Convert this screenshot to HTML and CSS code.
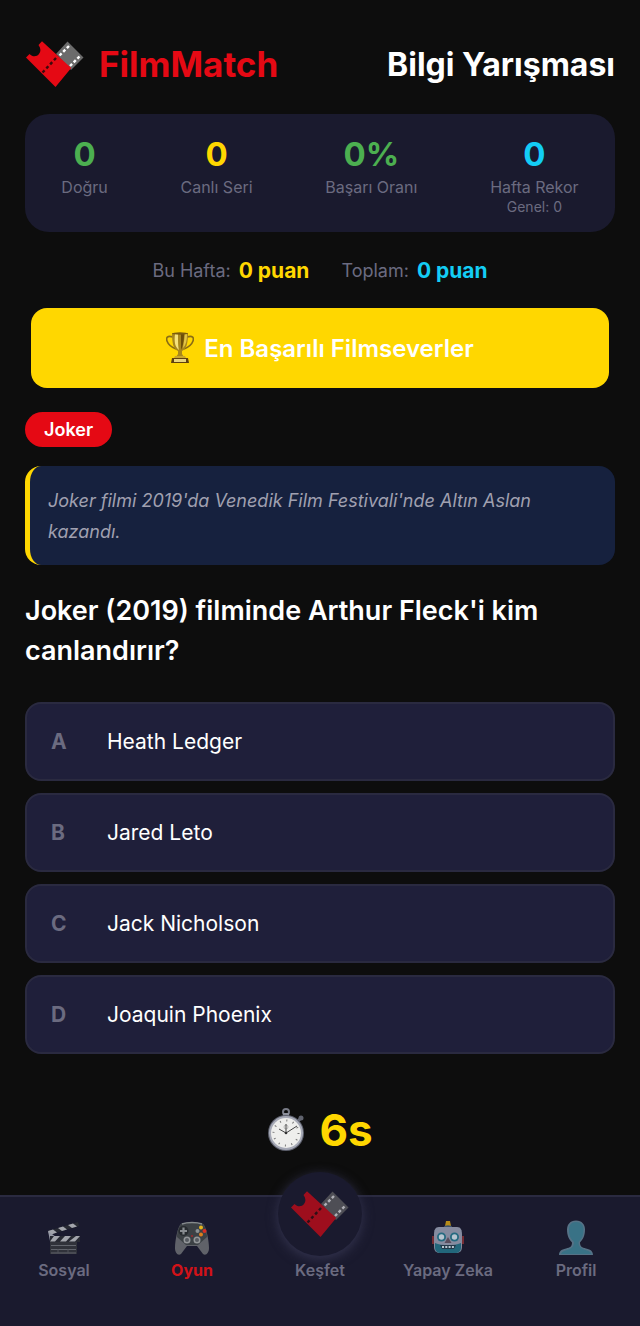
FILE: index.html
```html
<!DOCTYPE html>
<html lang="tr">
<head>
  <meta charset="UTF-8">
  <meta name="viewport" content="width=device-width, initial-scale=1.0">
  <title>FilmMatch - Bilgi Yarışması</title>
  <link rel="stylesheet" href="styles.css">
</head>
<body>

<!-- Logo is used in the header and in the nav -->
<svg class="sprite" aria-hidden="true">
  <symbol id="logo" viewBox="0 0 60 48">
    <path d="M42.500 1.500 58.500 17.500 46 30 31 14z" fill="#6b6b6b"/>
    <path d="M34.500 15.500 45.500 4.500M45 26 56 15" stroke="#fff" stroke-width="2.400" stroke-dasharray="3 2.200" fill="none"/>
    <path d="M17 1.300 46.200 28 30.500 47 1 17.500 4.500 14C8 17.500 12 16.500 14 14 16 11.500 16 8.500 13.500 5z" fill="#e50914"/>
    <path d="M17.500 32.500 32 17" stroke="#3a0a0c" stroke-width="2.400" stroke-dasharray="3 2.600" fill="none"/>
  </symbol>
</svg>

<main class="content">
  <header class="header">
    <a href="#" class="brand">
      <svg class="brand-logo" aria-hidden="true"><use href="#logo"/></svg>
      <span>FilmMatch</span>
    </a>
    <h1 class="title">Bilgi Yarışması</h1>
  </header>

  <section class="stats">
    <div class="stat">
      <span class="stat-value green">0</span>
      <span class="stat-label">Doğru</span>
    </div>
    <div class="stat">
      <span class="stat-value yellow">0</span>
      <span class="stat-label">Canlı Seri</span>
    </div>
    <div class="stat">
      <span class="stat-value green">0%</span>
      <span class="stat-label">Başarı Oranı</span>
    </div>
    <div class="stat">
      <span class="stat-value blue">0</span>
      <span class="stat-label">Hafta Rekor</span>
      <span class="stat-sub">Genel: 0</span>
    </div>
  </section>

  <div class="points">
    <div class="point">Bu Hafta: <strong class="yellow">0 puan</strong></div>
    <div class="point">Toplam: <strong class="blue">0 puan</strong></div>
  </div>

  <button type="button" class="leaders">
    <svg class="trophy" viewBox="0 0 28 32" aria-hidden="true">
      <path d="M7 5C1 3 0 6 1 9s4 6 9 8M21 5c6-2 7 1 6 4s-4 6-9 8" fill="none" stroke="#8a6d14" stroke-width="1.600"/>
      <path d="M6 1h16c0 9-1 16-6 18v3l2 3h-8l2-3v-3C7 17 6 10 6 1z" fill="#a8871c"/>
      <path d="M9 2h3c0 8 0 12 1 16C9 15 8 10 9 2z" fill="#f6e27c"/>
      <path d="M15 2h3c0 7-1 12-3 16z" fill="#6b4e0a"/>
      <path d="M19 2h2c0 6-1 11-4 14z" fill="#e2c446"/>
      <ellipse cx="14" cy="1.500" rx="8" ry="1.200" fill="#7b5c0d"/>
      <path d="M9 24h10l1 2H8z" fill="#c9a62b"/>
      <path d="M6 26h16l1 5H5z" fill="#5f4010"/>
      <path d="M8 27h12v3H8z" fill="#e8d47e"/>
    </svg>
    <span>En Başarılı Filmseverler</span>
  </button>

  <span class="badge">Joker</span>

  <p class="fact">Joker filmi 2019'da Venedik Film Festivali'nde Altın Aslan kazandı.</p>

  <h2 class="question">Joker (2019) filminde Arthur Fleck'i kim canlandırır?</h2>

  <div class="options">
    <button type="button" class="option"><span class="letter">A</span><span>Heath Ledger</span></button>
    <button type="button" class="option"><span class="letter">B</span><span>Jared Leto</span></button>
    <button type="button" class="option"><span class="letter">C</span><span>Jack Nicholson</span></button>
    <button type="button" class="option"><span class="letter">D</span><span>Joaquin Phoenix</span></button>
  </div>

  <div class="timer">
    <svg class="stopwatch" viewBox="0 0 38 44" aria-hidden="true">
      <circle cx="19" cy="4" r="3" fill="none" stroke="#777a85" stroke-width="2"/>
      <path d="M16 5h6v5h-6z" fill="#8d909b"/>
      <path d="M30 14l4-4" stroke="#6d707b" stroke-width="3"/>
      <circle cx="34" cy="10" r="2.500" fill="#60636e"/>
      <circle cx="19" cy="25" r="18" fill="#5d606d"/>
      <circle cx="19" cy="25" r="17" fill="#a6a9b6"/>
      <circle cx="19" cy="25" r="15" fill="#eeeeec"/>
      <circle cx="19" cy="25" r="12.500" fill="none" stroke="#777" stroke-width="2" stroke-dasharray="1 5.545"/>
      <circle cx="19" cy="19" r="2" fill="none" stroke="#aaa" stroke-width=".8"/>
      <path d="M12 21 19 25 30 18M19 25V16" fill="none" stroke="#444" stroke-width="1"/>
      <circle cx="19" cy="25" r="1.300" fill="#333"/>
    </svg>
    <span>6s</span>
  </div>
</main>

<nav class="nav">
  <a href="#" class="nav-item">
    <svg class="nav-icon" viewBox="0 0 36 36" aria-hidden="true">
      <path d="M2 11 32 2l1 4L3 15z" fill="#272932"/>
      <path d="M2 11 7 9.500 11 12.500 4 15zM12 8l5-1.500 4 3-5 1.500zM22 5l5-1.500 4 3-5 1.500z" fill="#a3a5ac"/>
      <path d="M2 11 10 17 4 21z" fill="#9699a5"/>
      <path d="M4 16h30v6H4z" fill="#272932"/>
      <path d="M8 16h6l-5 5.500H4zM19 16h6l-5 5.500h-6zM30 16h4l-5 5.500h-6z" fill="#a3a5ac"/>
      <path d="M4 22h27v12H4z" fill="#30323a"/>
      <path d="M5 25.500h25M5 29.500h25M5 33h25" stroke="#62656d" stroke-width="1"/>
      <path d="M12 29v4M22 29v4" stroke="#50525b" stroke-width="1"/>
    </svg>
    <span>Sosyal</span>
  </a>
  <a href="#" class="nav-item active">
    <svg class="nav-icon" viewBox="0 0 36 36" aria-hidden="true">
      <path d="M7 4c4-2 18-2 22 0 3 2 6 16 6 24 0 5-3 8-6 6l-6-8H13l-6 8c-3 2-6-1-6-6C1 20 4 6 7 4z" fill="#606269"/>
      <path d="M7 4c4-2 18-2 22 0 2 2 4 8 4 13L24 25H12L3 17C3 12 5 6 7 4z" fill="#3c4145"/>
      <path d="M8 4c5-2 15-2 20 0" fill="none" stroke="#858a8c" stroke-width="1.500"/>
      <circle cx="9.500" cy="11" r="5" fill="#272b2f"/>
      <path d="M9.500 7.500v7M6 11h7" stroke="#888c90" stroke-width="2.200"/>
      <circle cx="27" cy="7.500" r="2" fill="#e5b51b"/>
      <circle cx="23.500" cy="11" r="2" fill="#8a9194"/>
      <circle cx="30.500" cy="11" r="2" fill="#d92f24"/>
      <circle cx="27" cy="14.500" r="2" fill="#de7d1d"/>
      <circle cx="13" cy="20" r="3.500" fill="#939699"/><circle cx="13" cy="20" r="2" fill="#565a60"/>
      <circle cx="23" cy="20" r="3.500" fill="#939699"/><circle cx="23" cy="20" r="2" fill="#565a60"/>
      <circle cx="18" cy="16" r="1" fill="#a52a2d"/>
    </svg>
    <span>Oyun</span>
  </a>
  <a href="#" class="nav-item">
    <span class="nav-circle">
      <svg class="circle-logo" aria-hidden="true"><use href="#logo"/></svg>
    </span>
    <span>Keşfet</span>
  </a>
  <a href="#" class="nav-item">
    <svg class="nav-icon" viewBox="0 0 36 36" aria-hidden="true">
      <path d="M2 16h4v8H2zM30 16h4v8h-4z" fill="#762d34"/>
      <path d="M16 1h4l1 5h-6z" fill="#b68c18"/>
      <ellipse cx="18" cy="7" rx="4" ry="1.800" fill="#3c526b"/>
      <path d="M9 7h18c4 0 5 3 5 8v11c0 5-2 7-6 7H10c-4 0-6-2-6-7V15c0-5 1-8 5-8z" fill="#858b9f"/>
      <path d="M5 23c7 3 19 3 26 0v4c0 4-2 6-6 6H11c-4 0-6-2-6-6z" fill="#22677b"/>
      <circle cx="11.500" cy="17" r="4.500" fill="#256a80"/><circle cx="11.500" cy="17" r="2.700" fill="#b7c5d0"/>
      <circle cx="24.500" cy="17" r="4.500" fill="#256a80"/><circle cx="24.500" cy="17" r="2.700" fill="#b7c5d0"/>
      <path d="M18 17l3.500 6h-7z" fill="#594d5d"/>
      <path d="M10 25h16l-2 4H12z" fill="#233949"/>
      <path d="M12 27h12" stroke="#b7c5d0" stroke-width="2" stroke-dasharray="2 1.300"/>
    </svg>
    <span>Yapay Zeka</span>
  </a>
  <a href="#" class="nav-item">
    <svg class="nav-icon" viewBox="0 0 36 36" aria-hidden="true">
      <path d="M18 0.500c6 0 9 4 9 9 0 6-2 10-5 13 0 4 2 5 6 6 5 1 7 3 7 6.500H1C1 31.500 3 29.500 8 28.500c4-1 6-2 6-6-3-3-5-7-5-13 0-5 3-9 9-9z" fill="#567286"/>
      <path d="M18 2c5 0 7.500 3 7.500 8 0 6-2 9-5 12 0 5 3 7 7 8 4 1 5 2 6 4H3c1-2 2-3 6-4 4-1 7-3 7-8-3-3-5-6-5-12 0-5 2-8 7-8z" fill="#397286"/>
    </svg>
    <span>Profil</span>
  </a>
</nav>

</body>
</html>
```
FILE: styles.css
```css
* {
  box-sizing: border-box;
}

body {
  margin: 0;
  min-height: 100vh;
  display: flex;
  flex-direction: column;
  background-color: #0d0d0d;
  color: #fff;
  font-family: Inter, "Liberation Sans", sans-serif;
}

button {
  font-family: inherit;
  cursor: pointer;
}

a {
  text-decoration: none;
}

.sprite {
  display: none;
}

/* Accent colors */
.green { color: #4caf50; }
.yellow { color: #ffd700; }
.blue { color: #13cdf5; }

.content {
  flex: 1;
  padding: 40px 25px 0;
}

/* Header */
.header {
  display: flex;
  justify-content: space-between;
  align-items: center;
  height: 48px;
}

.brand {
  display: flex;
  align-items: center;
  gap: 14px;
  color: #e50914;
  font-size: 35px;
  font-weight: 700;
}

.brand-logo {
  width: 60px;
  height: 48px;
}

.title {
  margin: 0;
  font-size: 32px;
  font-weight: 700;
}

/* Stats card */
.stats {
  display: flex;
  justify-content: space-around;
  margin-top: 26px;
  padding: 19px 0 16px;
  background-color: #1a1a2e;
  border-radius: 24px;
}

.stat {
  display: flex;
  flex-direction: column;
  align-items: center;
  color: #6b6b80;
}

.stat-value {
  font-size: 33px;
  line-height: 42px;
  font-weight: 700;
}

.stat-label {
  margin-top: 2px;
  font-size: 16px;
  line-height: 20px;
}

.stat-sub {
  font-size: 14px;
  line-height: 19px;
}

/* Points row */
.points {
  display: flex;
  justify-content: center;
  gap: 32px;
  margin-top: 25px;
  font-size: 18px;
  line-height: 28px;
  color: #6b6b80;
}

.point {
  display: flex;
  gap: 8px;
}

.point strong {
  font-size: 21px;
}

.leaders {
  display: flex;
  justify-content: center;
  align-items: center;
  gap: 10px;
  width: calc(100% - 12px);
  height: 80px;
  margin: 23px 6px 0;
  border: none;
  border-radius: 16px;
  background-color: #ffd700;
  color: #fff;
  font-size: 24px;
  font-weight: 600;
}

.trophy {
  width: 28px;
  height: 32px;
}

/* Question */
.badge {
  display: block;
  width: fit-content;
  margin-top: 24px;
  padding: 0 19px;
  border-radius: 18px;
  background-color: #e50914;
  font-size: 18px;
  line-height: 35px;
  font-weight: 600;
}

.fact {
  margin: 19px 0 0;
  padding: 19px 18px 18px;
  border-left: 5px solid #ffd700;
  border-radius: 16px;
  background-color: #16213e;
  color: #a0a0b0;
  font-size: 18px;
  line-height: 31px;
  font-style: italic;
}

.question {
  margin: 26px 0 0;
  font-size: 27px;
  line-height: 40px;
  font-weight: 600;
}

.options {
  display: grid;
  gap: 12px;
  margin-top: 31px;
}

.option {
  display: grid;
  grid-template-columns: 56px 1fr;
  align-items: center;
  height: 79px;
  padding: 0 24px;
  border: 2px solid #2a2a40;
  border-radius: 16px;
  background-color: #1f1f3a;
  color: #fff;
  font-size: 21px;
  text-align: left;
}

.letter {
  color: #6b6b80;
  font-weight: 700;
}

.timer {
  display: flex;
  justify-content: center;
  align-items: center;
  gap: 14px;
  margin: 51px 0 36px;
  color: #ffd700;
  font-size: 44px;
  line-height: 50px;
  font-weight: 700;
}

.stopwatch {
  width: 38px;
  height: 44px;
}

/* Bottom navigation */
.nav {
  display: grid;
  grid-template-columns: repeat(5, 1fr);
  height: 131px;
  padding-bottom: 46px;
  border-top: 2px solid #2a2a40;
  background-color: #1a1a2e;
}

.nav-item {
  display: flex;
  flex-direction: column;
  justify-content: flex-end;
  align-items: center;
  gap: 4px;
  color: #6b6b80;
  font-size: 16px;
  line-height: 20px;
  font-weight: 600;
}

.nav-item.active {
  color: #d11218;
  font-weight: 700;
}

.nav-icon {
  width: 36px;
  height: 36px;
}

/* Round button rises above the bar */
.nav-circle {
  display: flex;
  justify-content: center;
  align-items: center;
  width: 84px;
  height: 84px;
  margin-top: -26px;
  border-radius: 50%;
  background-color: #1a1a2e;
  box-shadow: 0 3px 12px #34344f;
}

.circle-logo {
  width: 60px;
  height: 48px;
  opacity: 0.65;
}
```
